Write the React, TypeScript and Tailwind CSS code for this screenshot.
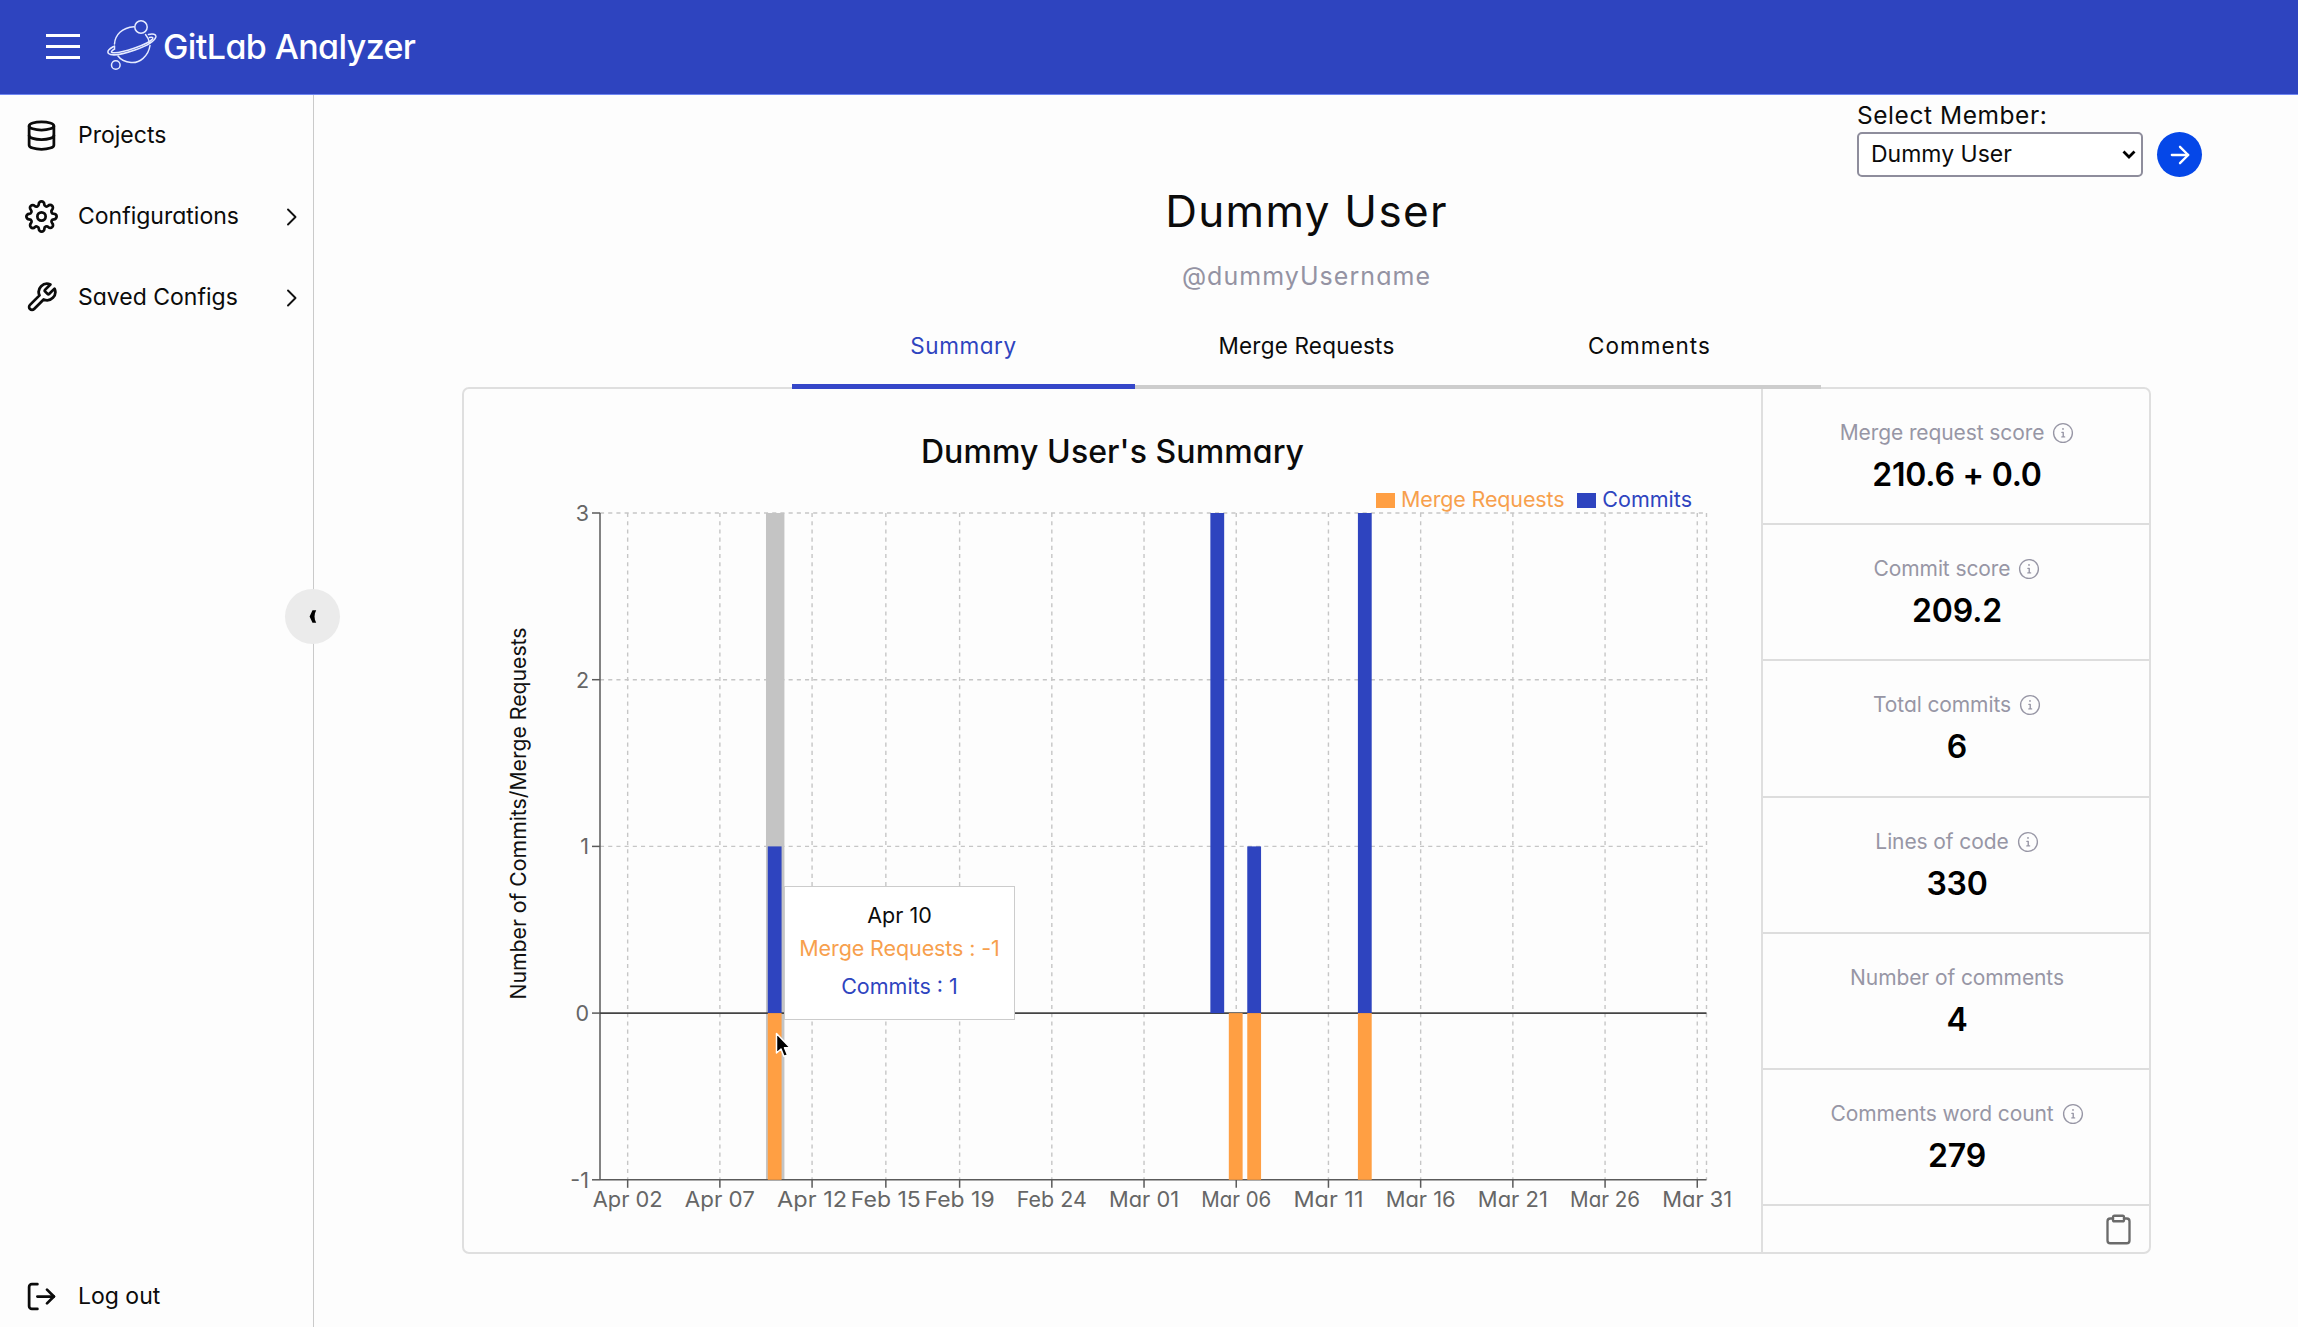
import React from 'react';
import { FiArrowRight, FiClipboard, FiDatabase, FiLogOut, FiSettings, FiTool } from 'react-icons/fi';
import { GoInfo } from 'react-icons/go';

const BLUE = '#2e44bf';
const ORANGE = '#ff9f43';

const Logo = () => (
  <svg width="52" height="54" viewBox="0 0 52 54" fill="none" stroke="#e6ebff" strokeWidth="1.5" strokeLinecap="round" className="block">
    <path d="M7.5 25C8 16 15 8.500 27 7.700" />
    <path d="M38.500 15.500C41 18.500 42 21 42.400 23.500" />
    <path d="M43 26.500C41.500 37 32.500 44.500 24 43.500C18 43 13.500 40.500 11 37" />
    <circle cx="34" cy="8" r="6.200" />
    <circle cx="8.800" cy="46" r="4.300" />
    <path d="M41.500 15.500C45.500 14.500 49.500 15 48.800 18C47.500 22.500 38 27.500 28 31C18 34.500 5 37.500 1.500 34.500C-.5 32 3 29.500 6.500 27.500" />
    <path d="M42.500 18.500C45 18 46.500 18.300 45.500 20C43.500 23 35 26.500 27 29.300C18.500 32.200 8.500 34.300 5 33.500C3.500 33 5 31.500 7.500 30.200V27" />
  </svg>
);

const Chevron = () => (
  <svg width="12" height="18" viewBox="0 0 12 18" fill="none" stroke="#111" strokeWidth="1.9" strokeLinecap="round" strokeLinejoin="round" className="ml-auto mr-[15px]">
    <path d="M2 1.500L9.500 9L2 16.500" />
  </svg>
);

const NavItem = ({ icon, label, expandable }: { icon: React.ReactNode; label: string; expandable?: boolean }) => (
  <a className="flex h-[81px] items-center pl-[25px] text-[23px]">
    <span className="w-[53px] shrink-0">{icon}</span>
    <span className="whitespace-nowrap">{label}</span>
    {expandable && <Chevron />}
  </a>
);

const stats: { label: string; value: string; info: boolean }[] = [
  { label: 'Merge request score', value: '210.6 + 0.0', info: true },
  { label: 'Commit score', value: '209.2', info: true },
  { label: 'Total commits', value: '6', info: true },
  { label: 'Lines of code', value: '330', info: true },
  { label: 'Number of comments', value: '4', info: false },
  { label: 'Comments word count', value: '279', info: true },
];

const ticks: [number, string][] = [
  [1, 'Apr 02'], [6, 'Apr 07'], [11, 'Apr 12'], [15, 'Feb 15'], [19, 'Feb 19'], [24, 'Feb 24'], [29, 'Mar 01'],
  [34, 'Mar 06'], [39, 'Mar 11'], [44, 'Mar 16'], [49, 'Mar 21'], [54, 'Mar 26'], [59, 'Mar 31'],
];
const bars: [number, number][] = [[9, 1], [9, -1], [33, 3], [34, -1], [35, 1], [35, -1], [41, 3], [41, -1]];

const LEFT = 136;
const RIGHT = 1242.5;
const TOP = 3;
const UNIT = 166.7;
const BAND = (RIGHT - LEFT) / 60;
const yOf = (v: number) => TOP + (3 - v) * UNIT;
const xOf = (i: number) => LEFT + (i + 0.5) * BAND;

const Chart = () => (
  <svg width="1297" height="740" viewBox="0 0 1297 740" className="block overflow-visible">
    <g stroke="#c6c6c6" strokeWidth="1.4" strokeDasharray="4.100 4.100">
      {[3, 2, 1].map((v) => <line key={v} x1={LEFT} x2={RIGHT} y1={yOf(v)} y2={yOf(v)} />)}
      {ticks.map(([i]) => <line key={i} x1={xOf(i)} x2={xOf(i)} y1={TOP} y2={yOf(-1)} />)}
      <line x1={RIGHT} x2={RIGHT} y1={TOP} y2={yOf(-1)} />
    </g>
    <rect x={LEFT + 9 * BAND} y={TOP} width={BAND} height={UNIT * 4} fill="#c4c4c4" />
    <g stroke="#5a5a5a" strokeWidth="1.500">
      <line x1={LEFT} x2={LEFT} y1={TOP} y2={yOf(-1)} />
      <line x1={LEFT} x2={RIGHT} y1={yOf(-1)} y2={yOf(-1)} />
      <line x1={LEFT} x2={RIGHT} y1={yOf(0)} y2={yOf(0)} stroke="#444" strokeWidth="1.800" />
      {[3, 2, 1, 0, -1].map((v) => <line key={v} x1={LEFT - 8} x2={LEFT} y1={yOf(v)} y2={yOf(v)} />)}
      {ticks.map(([i]) => <line key={i} x1={xOf(i)} x2={xOf(i)} y1={yOf(-1)} y2={yOf(-1) + 8} />)}
    </g>
    {bars.map(([i, v]) => (
      <rect key={`${i}:${v}`} x={LEFT + i * BAND + 1.8} width="13.800" y={v > 0 ? yOf(v) : yOf(0)} height={Math.abs(v) * UNIT} fill={v > 0 ? BLUE : ORANGE} />
    ))}
    <g fill="#666" fontSize="21.500">
      {[3, 2, 1, 0, -1].map((v) => <text key={v} x={LEFT - 11} y={yOf(v) + 8} textAnchor="end">{v}</text>)}
      {ticks.map(([i, t]) => (
        <text key={i} x={xOf(i)} y={yOf(-1) + 27} textAnchor="middle" textLength="70" lengthAdjust="spacingAndGlyphs">{t}</text>
      ))}
    </g>
    <text transform="translate(61.500 303.500) rotate(-90)" textAnchor="middle" fontSize="21.500" textLength="372" lengthAdjust="spacingAndGlyphs" fill="#111">
      Number of Commits/Merge Requests
    </text>
  </svg>
);

const Tooltip = () => (
  <div className="absolute left-[320px] top-[497px] h-[134px] w-[231px] border-[1.5px] border-[#ccc] bg-white text-center text-[21.5px] whitespace-nowrap">
    <p className="mt-[12px] leading-[32px]">Apr 10</p>
    <p className="mt-[1px] leading-[32px] tracking-[-0.1px] text-[#f7a04d]">Merge Requests : -1</p>
    <p className="mt-[6px] leading-[32px] text-[#2e44bf]">Commits : 1</p>
  </div>
);

const Pointer = () => (
  <svg width="18" height="27" viewBox="0 0 18 27" className="absolute left-[311px] top-[643px]">
    <path d="M1.500 1.500V21L6 17L9 24.500L12.500 23L9.500 15.800H15.200Z" fill="#000" stroke="#fff" strokeWidth="1.500" strokeLinejoin="round" />
  </svg>
);

export default function App() {
  return (
    <div className="flex h-[1327px] w-[2298px] flex-col overflow-hidden bg-[#fdfdfd] font-['Inter','Open_Sans',sans-serif] text-[#0b0b0b] [font-feature-settings:'cv11']">
      <header className="flex h-[95px] shrink-0 items-center border-b border-[#6f86f2] bg-[#2e44bf] pb-[2px] pl-[46px]">
        <div className="flex w-[34px] flex-col gap-[8px]">
          <span className="h-[3px] bg-white" />
          <span className="h-[3px] bg-white" />
          <span className="h-[3px] bg-white" />
        </div>
        <div className="ml-[27px]"><Logo /></div>
        <h1 className="ml-[4px] text-[34px] font-medium tracking-[-0.6px] text-white">GitLab Analyzer</h1>
      </header>

      <div className="flex min-h-0 flex-1">
        <aside className="relative flex w-[314px] shrink-0 flex-col border-r border-[#cacaca]">
          <nav>
            <NavItem icon={<FiDatabase size={33} />} label="Projects" />
            <NavItem icon={<FiSettings size={33} />} label="Configurations" expandable />
            <NavItem icon={<FiTool size={33} />} label="Saved Configs" expandable />
          </nav>
          <div className="mb-[-10px] mt-auto">
            <NavItem icon={<FiLogOut size={33} />} label="Log out" />
          </div>
          <button className="absolute right-[-27px] top-[494px] flex size-[55px] items-center justify-center rounded-full bg-[#ebebeb]">
            <svg width="8" height="13" viewBox="0 0 8 13"><path d="M3.500 .3H7.200C5 4 5 9 7.200 12.700H3.500L.6 6.500Z" fill="#000" /></svg>
          </button>
        </aside>

        <main className="relative flex flex-1 flex-col items-center pl-[1px]">
          <div className="absolute left-[1543px] top-[4px]">
            <div className="mb-[1px] text-[24.500px] leading-[32px] tracking-[0.55px]">Select Member:</div>
            <div className="flex items-center gap-[14px]">
              <div className="flex h-[45px] w-[286px] items-center justify-between rounded-[5px] border-2 border-[#8e8d9c] bg-white pl-[12px] pr-[5px] text-[23px]">
                <span>Dummy User</span>
                <svg width="14" height="9" viewBox="0 0 14 9" fill="none" stroke="#000" strokeWidth="2.800"><path d="M1.500 1.500L7 7L12.500 1.500" /></svg>
              </div>
              <button className="flex size-[45px] items-center justify-center rounded-full bg-[#0547e8] text-white"><FiArrowRight size={28} /></button>
            </div>
          </div>

          <h2 className="mt-[84px] text-[44px] leading-[64px] tracking-[1.300px]">Dummy User</h2>
          <p className="mt-[15px] text-[25px] leading-[36px] tracking-[1.050px] text-[#9493a3]">@dummyUsername</p>

          <div className="z-10 mt-[24px] flex h-[71px] w-[1029px] text-[22.500px]">
            <div className="flex flex-1 justify-center border-b-[5px] border-[#3547c9] pt-[11px] tracking-[0.6px] text-[#2e44bf]">Summary</div>
            <div className="mt-[2px] flex flex-1 justify-center border-b-[4px] border-[#cdcdcd] pt-[9px] tracking-[0.2px]">Merge Requests</div>
            <div className="mt-[2px] flex flex-1 justify-center border-b-[4px] border-[#cdcdcd] pt-[9px] tracking-[1px]">Comments</div>
          </div>

          <section className="mt-[-2px] flex h-[867px] w-[1689px] rounded-[7px] border-2 border-[#dfdfdf]">
            <div className="relative w-[1297px] shrink-0">
              <h3 className="pt-[39px] text-center text-[32px] font-medium leading-[48px] tracking-[0.1px]">Dummy User's Summary</h3>
              <div className="mt-[12px] flex h-[22px] items-center justify-end pr-[69px] text-[21.500px] leading-[22px]">
                <span className="mr-[6px] mt-[3px] h-[15px] w-[19px] bg-[#ff9f43]" />
                <span className="tracking-[-0.15px] text-[#f7a04d]">Merge Requests</span>
                <span className="ml-[13px] mr-[6px] mt-[3px] h-[15px] w-[19px] bg-[#2e44bf]" />
                <span className="text-[#2e44bf]">Commits</span>
              </div>
              <Chart />
              <Tooltip />
              <Pointer />
            </div>
            <div className="flex flex-1 flex-col border-l-2 border-[#dfdfdf]">
              {stats.map((s) => (
                <div key={s.label} className="flex h-[136.200px] flex-col items-center border-b-2 border-[#dddddd] pt-[28px]">
                  <div className="flex items-center gap-[8px] pl-[2px] text-[21px] leading-[32px] tracking-[-0.1px] text-[#9796a5]">
                    {s.label}
                    {s.info && <GoInfo size={22} />}
                  </div>
                  <div className="mt-[4px] pl-[2px] text-[32px] font-semibold leading-[44px] tracking-[-0.2px] text-black">{s.value}</div>
                </div>
              ))}
              <div className="flex flex-1 items-center justify-end pr-[14px] text-[#6b6b6b]">
                <FiClipboard size={33} strokeWidth={1.7} />
              </div>
            </div>
          </section>
        </main>
      </div>
    </div>
  );
}
